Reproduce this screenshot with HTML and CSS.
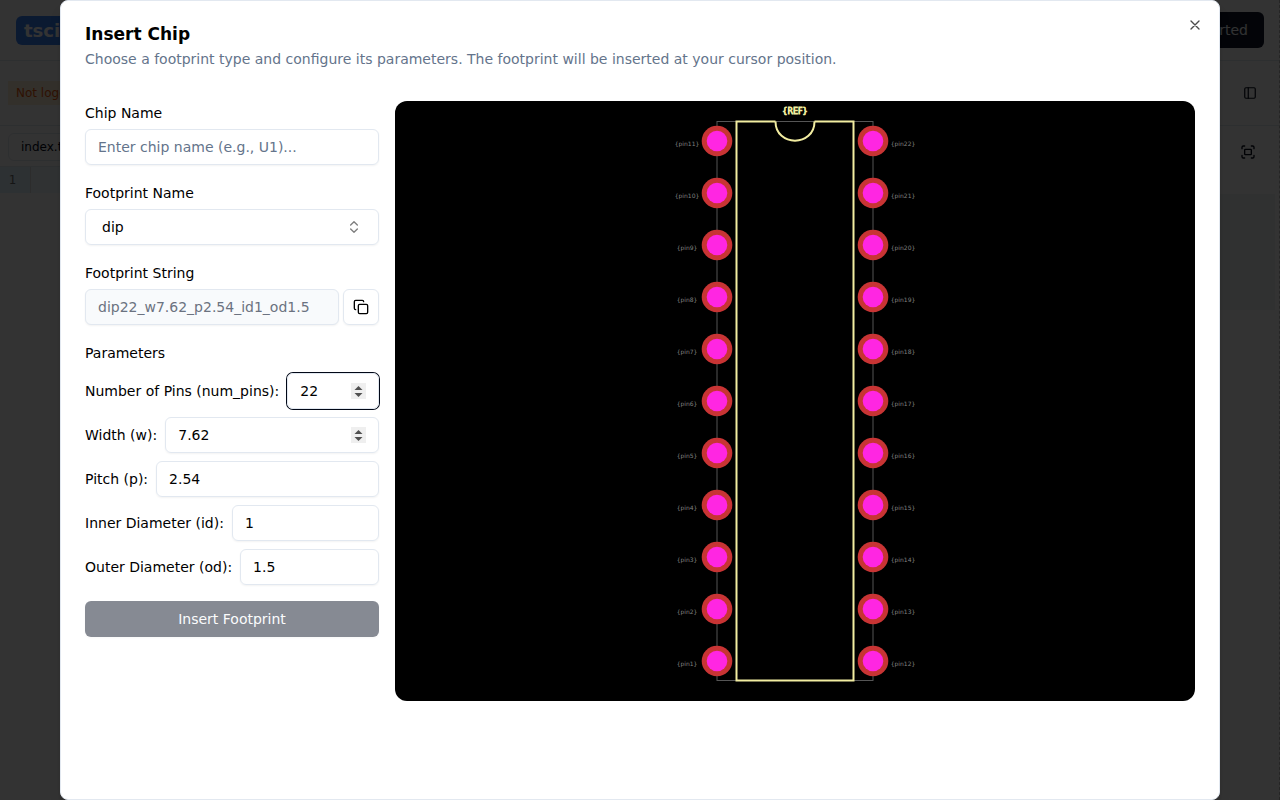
FILE: index.html
```html
<!DOCTYPE html>
<html lang="en">
<head>
<meta charset="utf-8">
<meta name="viewport" content="width=device-width, initial-scale=1">
<title>Insert Chip</title>
<link rel="stylesheet" href="styles.css">
</head>
<body>
<div class="page">
  <header class="site-header">
    <a class="logo" href="#">tsci</a>
    <button class="get-started" type="button">Get Started</button>
  </header>
  <div class="toolbar">
    <span class="notice">Not logged in</span>
    <button class="icon-button" type="button" aria-label="Toggle sidebar">
      <svg class="icon-small" viewBox="0 0 24 24"><rect x="3" y="3" width="18" height="18" rx="2"/><path d="M9 3v18"/></svg>
    </button>
  </div>
  <div class="workspace">
    <section class="editor">
      <div class="tabs"><button class="tab" type="button">index.tsx</button></div>
      <div class="code-line"><span class="line-number">1</span></div>
    </section>
    <section class="preview-pane">
      <div class="preview-tools">
        <button class="icon-button" type="button" aria-label="Fullscreen">
          <svg class="icon" viewBox="0 0 24 24"><path d="M3 7V5a2 2 0 0 1 2-2h2M17 3h2a2 2 0 0 1 2 2v2M21 17v2a2 2 0 0 1-2 2h-2M7 21H5a2 2 0 0 1-2-2v-2"/><rect x="7" y="8" width="10" height="8" rx="1"/></svg>
        </button>
      </div>
      <div class="preview-card"></div>
    </section>
  </div>
</div>

<div class="overlay">
  <div class="dialog" role="dialog" aria-modal="true" aria-labelledby="title" aria-describedby="description">
    <button class="close" type="button" aria-label="Close">
      <svg class="icon" viewBox="0 0 24 24"><path d="M18 6 6 18M6 6l12 12"/></svg>
    </button>
    <div class="dialog-header">
      <h2 class="title" id="title">Insert Chip</h2>
      <p class="description" id="description">Choose a footprint type and configure its parameters. The footprint will be inserted at your cursor position.</p>
    </div>
    <div class="content">
      <form class="form">
        <div class="field">
          <label for="chip-name">Chip Name</label>
          <input class="input" id="chip-name" type="text" placeholder="Enter chip name (e.g., U1)...">
        </div>
        <div class="field">
          <label for="footprint-name">Footprint Name</label>
          <div class="select-box">
            <select class="input select" id="footprint-name"><option>dip</option></select>
            <svg class="icon chevrons" viewBox="0 0 24 24"><path d="m7 15 5 5 5-5M7 9l5-5 5 5"/></svg>
          </div>
        </div>
        <div class="field">
          <label for="footprint-string">Footprint String</label>
          <div class="copy-row">
            <input class="input readonly" id="footprint-string" type="text" value="dip22_w7.62_p2.54_id1_od1.5" readonly>
            <button class="copy" type="button" aria-label="Copy">
              <svg class="icon" viewBox="0 0 24 24"><rect x="8" y="8" width="14" height="14" rx="2"/><path d="M4 16c-1.1 0-2-.9-2-2V4c0-1.1.9-2 2-2h10c1.1 0 2 .9 2 2"/></svg>
            </button>
          </div>
        </div>
        <fieldset class="parameters">
          <legend>Parameters</legend>
          <div class="parameter"><label for="num-pins">Number of Pins (num_pins):</label><input class="input" id="num-pins" type="number" value="22" autofocus></div>
          <div class="parameter"><label for="w">Width (w):</label><input class="input" id="w" type="number" step="0.01" value="7.62"></div>
          <div class="parameter"><label for="p">Pitch (p):</label><input class="input" id="p" type="text" value="2.54"></div>
          <div class="parameter"><label for="inner">Inner Diameter (id):</label><input class="input" id="inner" type="text" value="1"></div>
          <div class="parameter"><label for="outer">Outer Diameter (od):</label><input class="input" id="outer" type="text" value="1.5"></div>
        </fieldset>
        <button class="submit" type="submit" disabled>Insert Footprint</button>
      </form>
      <svg class="footprint" viewBox="0 0 800 600" role="img" aria-label="Footprint preview">
        <defs>
          <g id="pad"><circle r="15.3" fill="#c83434"/><circle r="10.3" fill="#ff26e2"/></g>
          <g id="pads">
            <use href="#pad" y="40"/><use href="#pad" y="92"/><use href="#pad" y="144"/><use href="#pad" y="196"/>
            <use href="#pad" y="248"/><use href="#pad" y="300"/><use href="#pad" y="352"/><use href="#pad" y="404"/>
            <use href="#pad" y="456"/><use href="#pad" y="508"/><use href="#pad" y="560"/>
          </g>
        </defs>
        <rect class="courtyard" x="322" y="20.5" width="156" height="559"/>
        <path class="silkscreen" d="M380.5 20.5H341.5V579.5H458.5V20.5H419.5M380.5 20.5C380.5 46 419.5 46 419.5 20.5"/>
        <use href="#pads" x="322"/><use href="#pads" x="478"/>
        <text class="reference" x="400" y="13">{REF}</text>
        <g class="pin-labels">
          <text x="292" y="45">{pin11}</text><text x="508" y="45">{pin22}</text>
          <text x="292" y="97">{pin10}</text><text x="508" y="97">{pin21}</text>
          <text x="292" y="149">{pin9}</text><text x="508" y="149">{pin20}</text>
          <text x="292" y="201">{pin8}</text><text x="508" y="201">{pin19}</text>
          <text x="292" y="253">{pin7}</text><text x="508" y="253">{pin18}</text>
          <text x="292" y="305">{pin6}</text><text x="508" y="305">{pin17}</text>
          <text x="292" y="357">{pin5}</text><text x="508" y="357">{pin16}</text>
          <text x="292" y="409">{pin4}</text><text x="508" y="409">{pin15}</text>
          <text x="292" y="461">{pin3}</text><text x="508" y="461">{pin14}</text>
          <text x="292" y="513">{pin2}</text><text x="508" y="513">{pin13}</text>
          <text x="292" y="565">{pin1}</text><text x="508" y="565">{pin12}</text>
        </g>
      </svg>
    </div>
  </div>
</div>
</body>
</html>
```
FILE: styles.css
```css
* { box-sizing: border-box; }
body {
  margin: 0;
  overflow: hidden;
  font: 14px/20px "DejaVu Sans", sans-serif;
  color: #020817;
  background: #fff;
}
button, input, select { font: inherit; color: inherit; }
button { padding: 0; border: 0; background: none; }
svg { display: block; }
.icon, .icon-small {
  width: 16px;
  height: 16px;
  fill: none;
  stroke: currentColor;
  stroke-width: 2;
  stroke-linecap: round;
  stroke-linejoin: round;
}
.icon-small { width: 14px; height: 14px; }

.page { min-height: 100vh; border-right: 1px dashed #bbb; }
.site-header, .toolbar {
  display: flex;
  align-items: center;
  justify-content: space-between;
  border-bottom: 1px solid #e2e8f0;
}
.site-header { height: 61px; padding: 0 15px 0 16px; }
.logo {
  padding: 0 8px;
  border-radius: 6px;
  font-size: 18px;
  font-weight: 700;
  line-height: 29px;
  color: #fff;
  background: #3b82f6;
  text-decoration: none;
}
.get-started {
  padding: 8px 16px;
  border-radius: 6px;
  color: #f8fafc;
  background: #0f172a;
}
.toolbar { height: 65px; padding: 0 22px 0 8px; }
.notice {
  padding: 2px 8px;
  font-size: 12px;
  color: #ea580c;
  background: #ffedd5;
}
.workspace { display: grid; grid-template-columns: 1fr 1fr; }
.tabs { height: 41px; padding: 7px 8px; border-bottom: 1px solid #e2e8f0; }
.tab {
  height: 28px;
  padding: 0 12px;
  border: 1px solid #e2e8f0;
  border-radius: 6px;
  font-size: 12px;
}
.code-line { height: 26px; background: linear-gradient(to right, #e2f2ff 30px, #f0f9ff 30px); }
.line-number {
  display: block;
  width: 31px;
  padding: 3px 14px 3px 0;
  border-right: 1px solid #ddd;
  font: 12px/20px "DejaVu Sans Mono", monospace;
  color: #6c6c6c;
  text-align: right;
}
.preview-tools { display: flex; justify-content: flex-end; padding: 18px 23px 0 0; }
.preview-card { height: 116px; margin: 34px 4px 0 0; background: #f0f6f4; }

.overlay {
  position: absolute;
  inset: 0;
  padding: 0 60px;
  background: rgb(0 0 0 / 80%);
}
.dialog {
  position: relative;
  height: 100%;
  padding: 24px;
  border: 1px solid #e2e8f0;
  border-radius: 8px;
  background: #fff;
  box-shadow: 0 10px 15px -3px rgb(0 0 0 / 10%), 0 4px 6px -4px rgb(0 0 0 / 10%);
  color: #000;
}
.close { position: absolute; top: 16px; right: 16px; opacity: 0.7; }
.close .icon { stroke-width: 2; }
.dialog-header { display: grid; gap: 6px; margin-bottom: 32px; }
.title { margin: 0; font-size: 17px; line-height: 18px; font-weight: 600; }
.description { margin: 0; color: #64748b; }
.content {
  display: grid;
  grid-template-columns: minmax(0, 294fr) minmax(0, 800fr);
  gap: 16px;
  align-items: start;
}
.form { display: grid; gap: 16px; }
.field { display: grid; gap: 4px; line-height: 24px; }
.input {
  width: 100%;
  min-width: 0;
  height: 36px;
  padding: 4px 12px;
  border: 1px solid #e2e8f0;
  border-radius: 6px;
  background: transparent;
  box-shadow: 0 1px 2px rgb(0 0 0 / 5%);
  outline: none;
}
.input::placeholder { color: #64748b; }
.input:focus { box-shadow: 0 0 0 1px #020817; }
.input::-webkit-inner-spin-button {
  appearance: none;
  width: 15px;
  height: 16px;
  opacity: 1;
  background: #efefef url("data:image/svg+xml,%3Csvg xmlns='http://www.w3.org/2000/svg' viewBox='0 0 15 16'%3E%3Cpath fill='%23505050' d='M3.5 7h8l-4-4zM3.5 10h8l-4 4z'/%3E%3C/svg%3E") center / 15px 16px no-repeat;
}
.select-box { display: grid; align-items: center; }
.select { grid-area: 1 / 1; padding: 0 16px; appearance: none; }
.chevrons { grid-area: 1 / 1; justify-self: end; margin-right: 17px; opacity: 0.5; }
.copy-row { display: flex; gap: 4px; }
.readonly { flex: 1; color: #6b7280; background: #f8fafc; }
.copy {
  display: grid;
  place-items: center;
  flex: 0 0 36px;
  height: 36px;
  border: 1px solid #e2e8f0;
  border-radius: 6px;
  box-shadow: 0 1px 2px rgb(0 0 0 / 5%);
}
.parameters { display: grid; gap: 8px; min-width: 0; margin: 0; padding: 0; border: 0; }
.parameters legend { padding: 0 0 8px; line-height: 24px; }
.parameter { display: flex; align-items: center; gap: 8px; }
.parameter label { flex: none; }
.parameter .input { flex: 1; }
.submit {
  height: 36px;
  border-radius: 6px;
  color: #f8fafc;
  background: #0f172a;
  box-shadow: 0 1px 2px rgb(0 0 0 / 5%);
  opacity: 0.5;
}
.footprint { width: 100%; border-radius: 12px; background: #000; }
.courtyard { fill: none; stroke: #555; stroke-width: 1; }
.silkscreen { fill: none; stroke: #f2eda1; stroke-width: 2; }
.reference {
  font-size: 8px;
  fill: #f2eda1;
  stroke: #f2eda1;
  stroke-width: 0.8;
  text-anchor: middle;
}
.pin-labels { font-size: 6px; fill: #808080; text-anchor: middle; }
```
